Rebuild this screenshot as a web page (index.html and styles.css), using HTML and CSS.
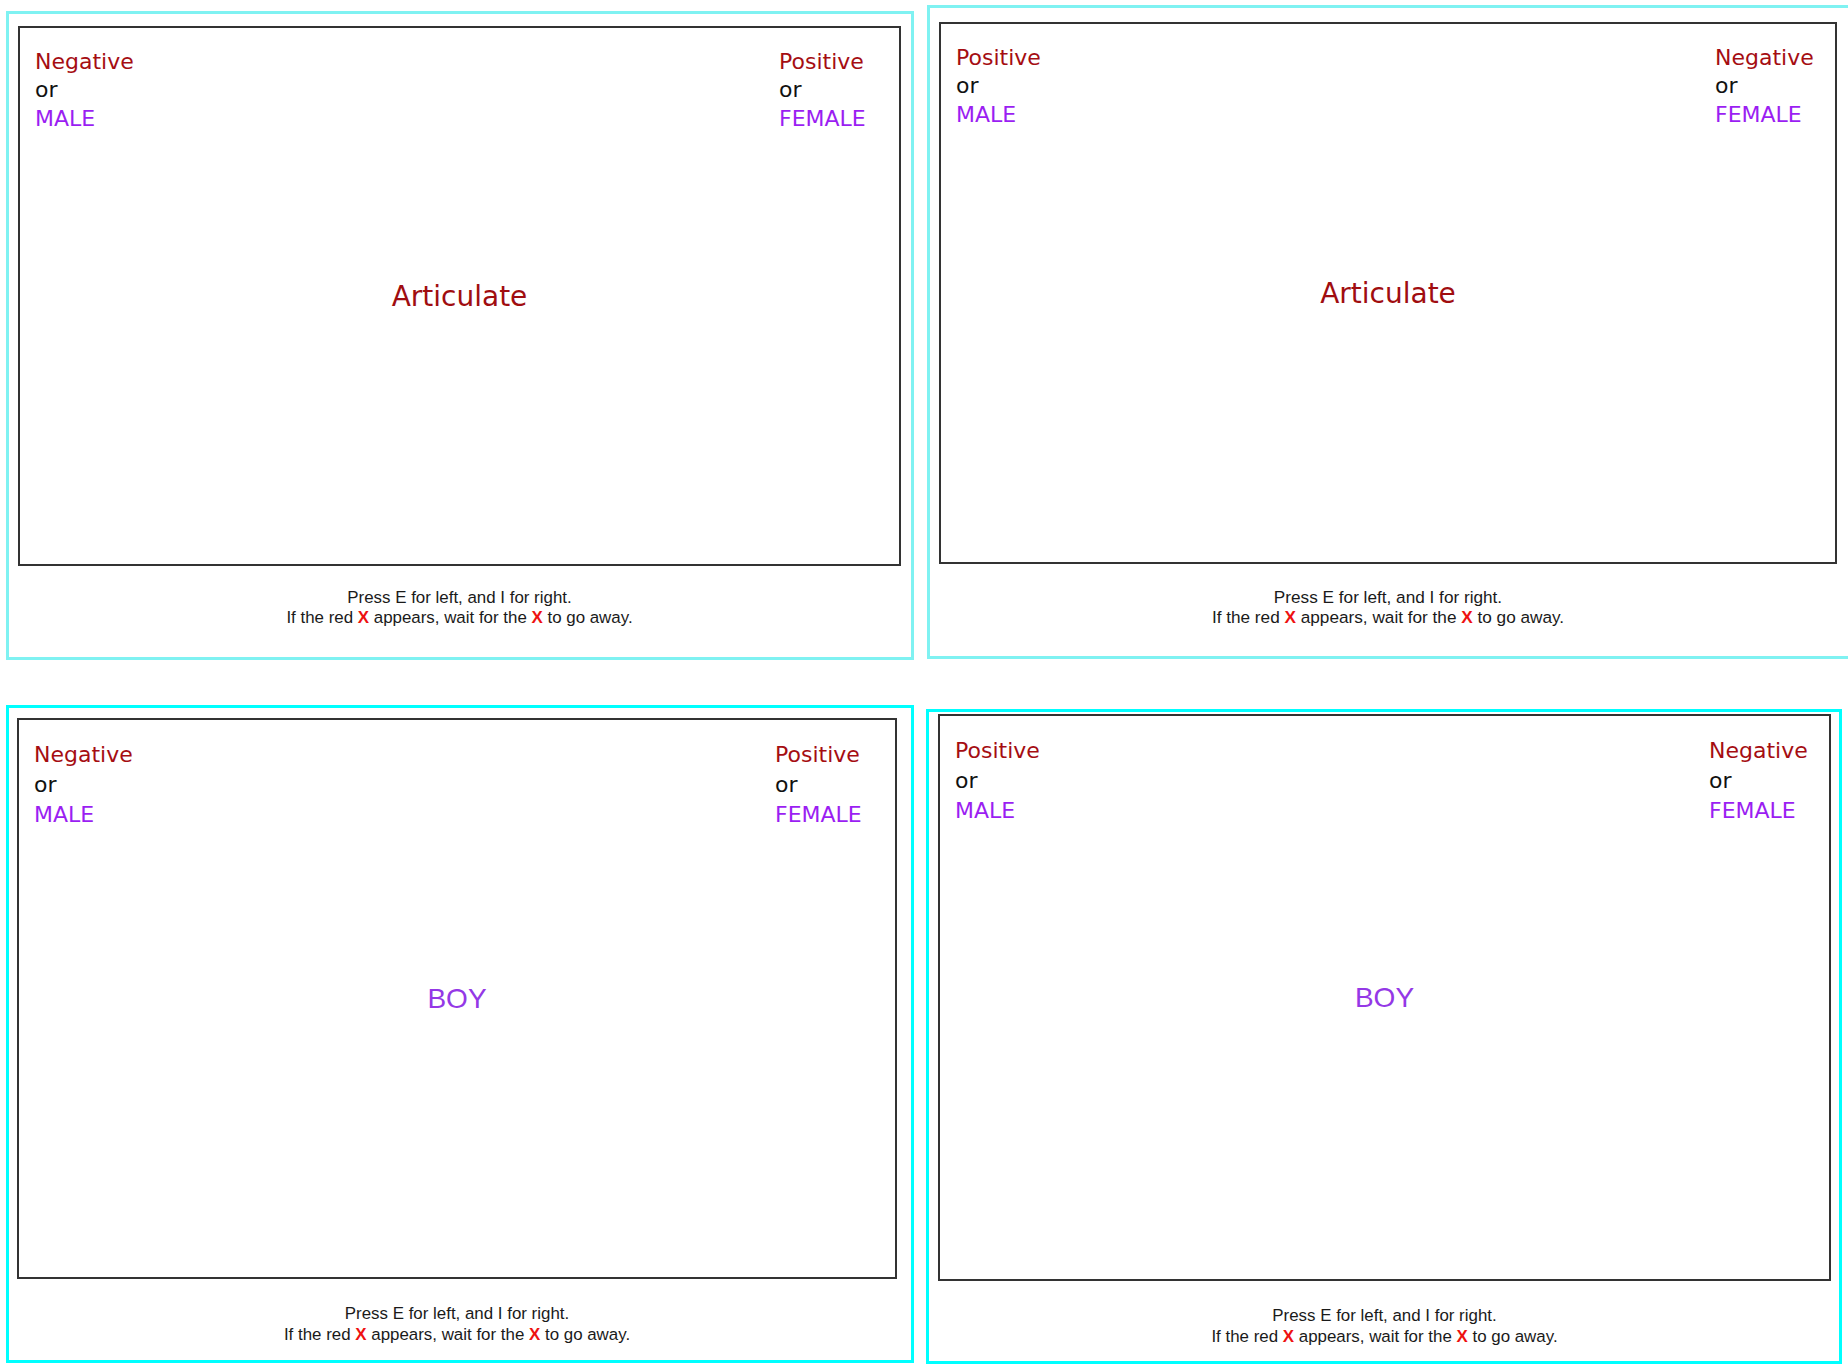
FILE: index.html
```html
<!DOCTYPE html>
<html lang="en">
<head>
<meta charset="utf-8">
<title>IAT trials</title>
<link rel="stylesheet" href="styles.css">
</head>
<body>
<div class="page">
  <div class="row row-top">
    <section class="panel panel-1 light">
      <div class="stage">
        <div class="labels">
          <div class="group"><span class="cat">Negative</span><span class="or">or</span><span class="gender">MALE</span></div>
          <div class="group group-right"><span class="cat">Positive</span><span class="or">or</span><span class="gender">FEMALE</span></div>
        </div>
        <div class="stimulus attr">Articulate</div>
      </div>
      <p class="instructions">Press E for left, and I for right.<br>If the red <span class="x">X</span> appears, wait for the <span class="x">X</span> to go away.</p>
    </section>
    <section class="panel panel-2 light">
      <div class="stage">
        <div class="labels">
          <div class="group"><span class="cat">Positive</span><span class="or">or</span><span class="gender">MALE</span></div>
          <div class="group group-right"><span class="cat">Negative</span><span class="or">or</span><span class="gender">FEMALE</span></div>
        </div>
        <div class="stimulus attr">Articulate</div>
      </div>
      <p class="instructions">Press E for left, and I for right.<br>If the red <span class="x">X</span> appears, wait for the <span class="x">X</span> to go away.</p>
    </section>
  </div>
  <div class="row row-bottom">
    <section class="panel panel-3 bright">
      <div class="stage">
        <div class="labels">
          <div class="group"><span class="cat">Negative</span><span class="or">or</span><span class="gender">MALE</span></div>
          <div class="group group-right"><span class="cat">Positive</span><span class="or">or</span><span class="gender">FEMALE</span></div>
        </div>
        <div class="stimulus target">BOY</div>
      </div>
      <p class="instructions">Press E for left, and I for right.<br>If the red <span class="x">X</span> appears, wait for the <span class="x">X</span> to go away.</p>
    </section>
    <section class="panel panel-4 bright">
      <div class="stage">
        <div class="labels">
          <div class="group"><span class="cat">Positive</span><span class="or">or</span><span class="gender">MALE</span></div>
          <div class="group group-right"><span class="cat">Negative</span><span class="or">or</span><span class="gender">FEMALE</span></div>
        </div>
        <div class="stimulus target">BOY</div>
      </div>
      <p class="instructions">Press E for left, and I for right.<br>If the red <span class="x">X</span> appears, wait for the <span class="x">X</span> to go away.</p>
    </section>
  </div>
</div>
</body>
</html>
```

FILE: styles.css
```css
* { box-sizing: border-box; }

html, body {
  margin: 0;
  padding: 0;
  background: #ffffff;
  overflow: hidden;
}

.page {
  width: 1848px;
  height: 1372px;
  display: flex;
  flex-direction: column;
}

.row {
  display: flex;
  align-items: flex-start;
  height: 660px;
  flex: none;
}

.row-bottom { height: auto; }

.panel {
  flex: none;
  display: flex;
  flex-direction: column;
  border: 3px solid #7ff2f2;
}

.panel.bright { border-color: #00ffff; }

.panel-1 {
  margin: 11px 0 0 6px;
  width: 908px;
  height: 649px;
  padding: 12px 10px 0 9px;
}
.panel-1 .stage { height: 540px; }

.panel-2 {
  margin: 5px 0 0 13px;
  width: 925px;
  height: 654px;
  padding: 14px 12px 0 9px;
}
.panel-2 .stage { height: 542px; }

.panel-3 {
  margin: 45px 0 0 6px;
  width: 908px;
  height: 658px;
  padding: 10px 14px 0 8px;
}
.panel-3 .stage { height: 561px; }

.panel-4 {
  margin: 49px 0 0 12px;
  width: 916px;
  height: 655px;
  padding: 2px 8px 0 9px;
}
.panel-4 .stage { height: 567px; }

.stage {
  flex: none;
  border: 2px solid #333333;
  display: grid;
  grid-template-columns: 1fr;
  grid-template-rows: 1fr;
  font-family: "DejaVu Sans", "Noto Sans", sans-serif;
}

.labels {
  grid-area: 1 / 1;
  align-self: start;
  display: flex;
  justify-content: space-between;
  padding: 20px 0 0 15px;
  font-size: 22px;
  line-height: 28.3px;
}

.panel-3 .labels,
.panel-4 .labels {
  line-height: 29.8px;
  padding-top: 20px;
}

.group {
  display: flex;
  flex-direction: column;
  align-items: flex-start;
}

.group-right { width: 120px; }

.cat { color: #a50d12; }
.or { color: #111111; }
.gender { color: #9b1ef2; }

.stimulus {
  grid-area: 1 / 1;
  align-self: center;
  justify-self: center;
  font-size: 28px;
  line-height: 36px;
  margin-top: 2px;
}

.attr { color: #a00d10; }
.target {
  color: #9438e6;
  font-family: "Liberation Sans", Arial, sans-serif;
  font-size: 28px;
  margin-top: 0;
}

.instructions {
  margin: 22px 0 0 0;
  text-align: center;
  font-family: "Liberation Sans", Arial, sans-serif;
  font-size: 16.9px;
  line-height: 20px;
  color: #1a1a1a;
}

.panel-2 .instructions { margin-top: 23px; font-size: 17.2px; }
.panel-3 .instructions,
.panel-4 .instructions { margin-top: 24px; line-height: 21px; }

.x {
  color: #ee1111;
  font-weight: bold;
}
```
